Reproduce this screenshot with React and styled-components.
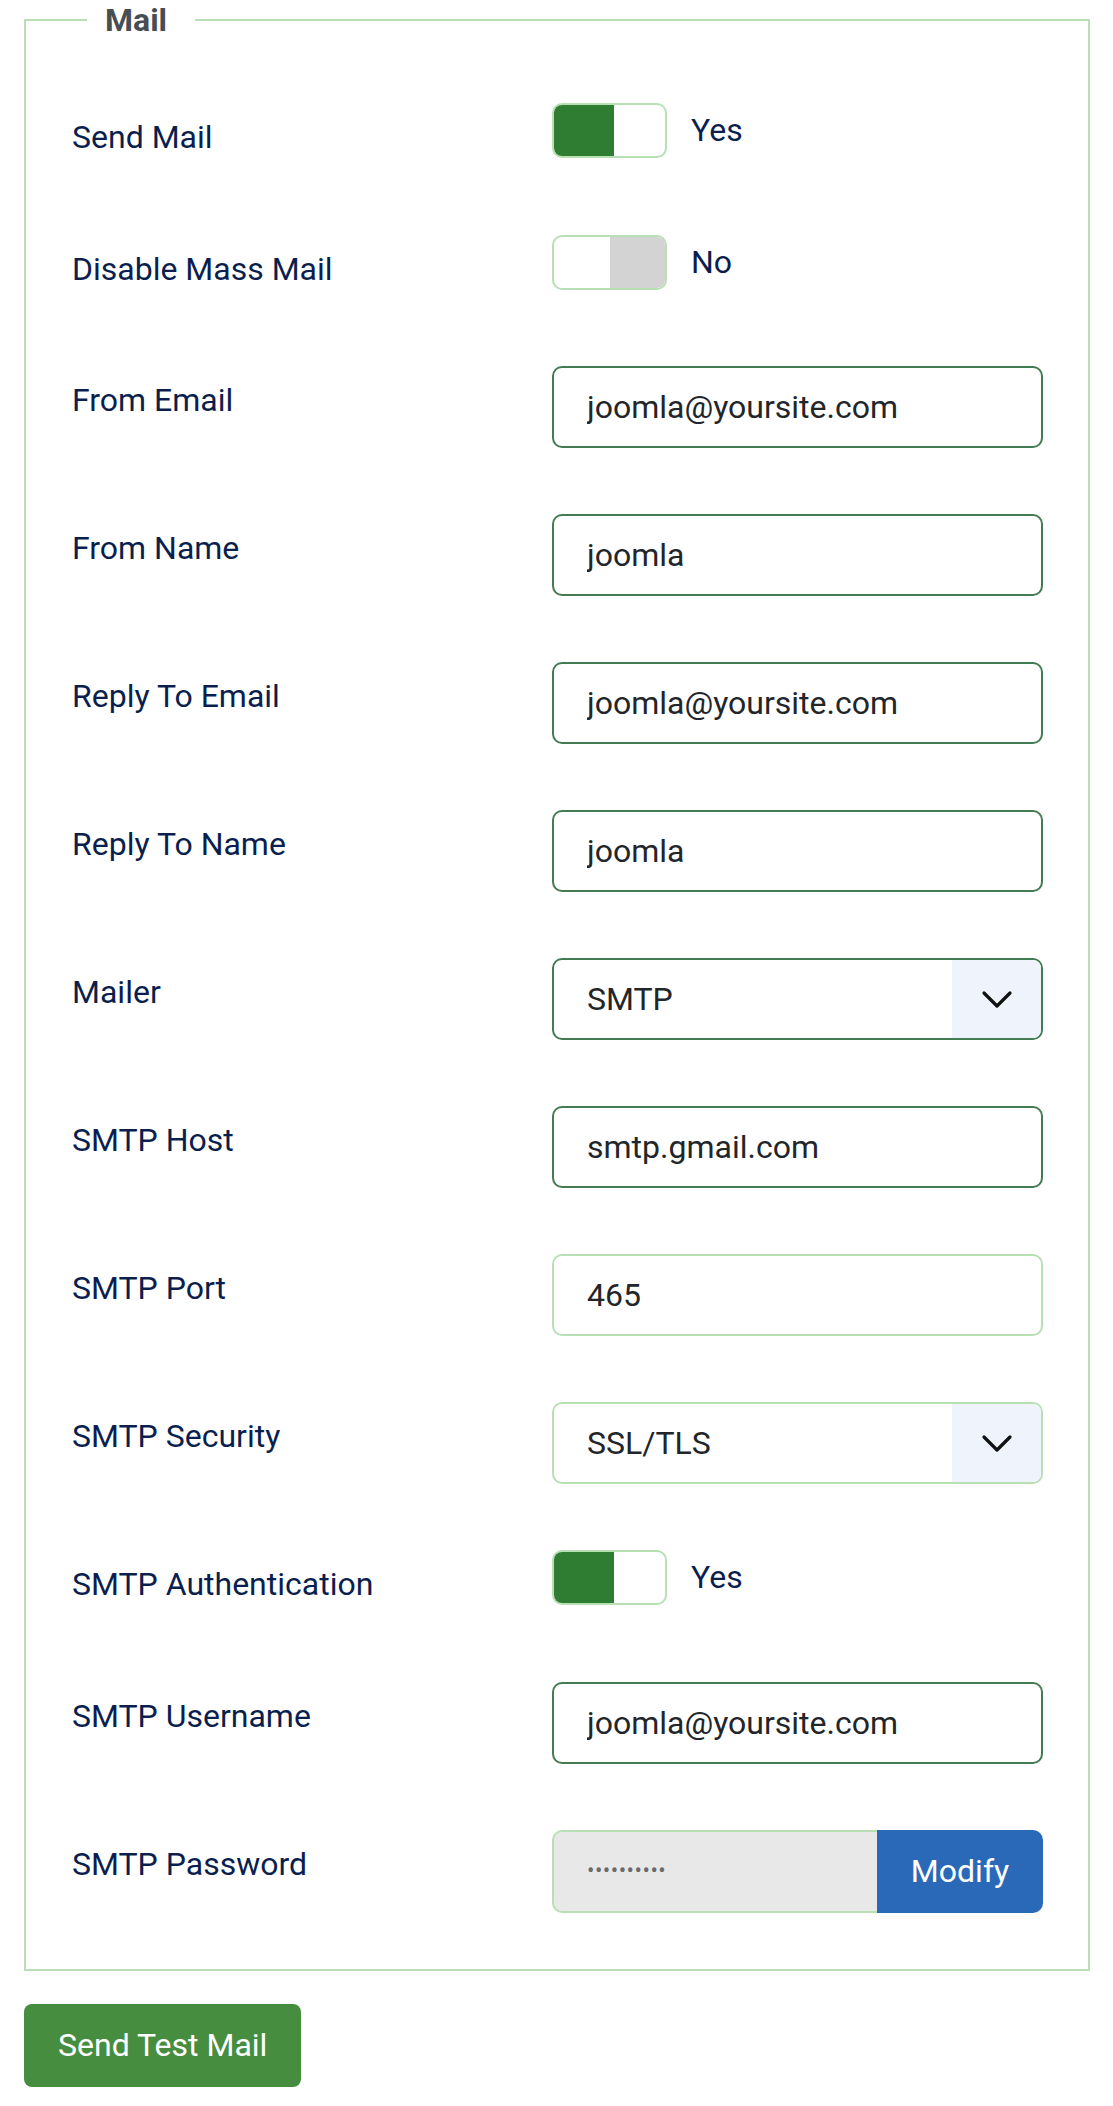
import React from 'react';
import styled, { createGlobalStyle } from 'styled-components';

const FIELDS = [
  { label: 'Send Mail', type: 'switch', on: true },
  { label: 'Disable Mass Mail', type: 'switch', on: false },
  { label: 'From Email', type: 'text', value: 'joomla@yoursite.com' },
  { label: 'From Name', type: 'text', value: 'joomla' },
  { label: 'Reply To Email', type: 'text', value: 'joomla@yoursite.com' },
  { label: 'Reply To Name', type: 'text', value: 'joomla' },
  { label: 'Mailer', type: 'select', value: 'SMTP' },
  { label: 'SMTP Host', type: 'text', value: 'smtp.gmail.com' },
  { label: 'SMTP Port', type: 'text', value: '465', light: true },
  { label: 'SMTP Security', type: 'select', value: 'SSL/TLS', light: true },
  { label: 'SMTP Authentication', type: 'switch', on: true },
  { label: 'SMTP Username', type: 'text', value: 'joomla@yoursite.com' },
  { label: 'SMTP Password', type: 'password', value: '••••••••••' },
];

export default function App() {
  const renderControl = field => {
    switch (field.type) {
      case 'switch':
        return (
          <SwitchWrap>
            <Switch $on={field.on}>
              <Knob $on={field.on} />
            </Switch>
            <SwitchText>{field.on ? 'Yes' : 'No'}</SwitchText>
          </SwitchWrap>
        );
      case 'select':
        return (
          <Select $light={field.light}>
            <SelectValue>{field.value}</SelectValue>
            <ArrowBox>
              <svg width="32" height="20" viewBox="0 0 32 20" fill="none">
                <path
                  d="M3 3 L16 16 L29 3"
                  stroke="#111"
                  strokeWidth="3.2"
                  strokeLinecap="round"
                  strokeLinejoin="round"
                />
              </svg>
            </ArrowBox>
          </Select>
        );
      case 'password':
        return (
          <InputGroup>
            <PasswordBox>{field.value}</PasswordBox>
            <ModifyButton type="button">Modify</ModifyButton>
          </InputGroup>
        );
      default:
        return <TextInput $light={field.light} value={field.value} readOnly />;
    }
  };

  return (
    <Page>
      <GlobalStyle />
      <Fieldset>
        <Legend>Mail</Legend>
        {FIELDS.map(field => (
          <ControlGroup key={field.label}>
            <Label>{field.label}</Label>
            <Controls>{renderControl(field)}</Controls>
          </ControlGroup>
        ))}
      </Fieldset>
      <TestButton type="button">Send Test Mail</TestButton>
    </Page>
  );
}

const GlobalStyle = createGlobalStyle`
  body {
    margin: 0;
    background: #fff;
    font-family: Roboto, "Liberation Sans", sans-serif;
  }
`;

const Page = styled.div`
  padding: 0 23px 0 24px;
`;

const Fieldset = styled.fieldset`
  margin: 0;
  padding: 63px 45px 56px 46px;
  border: 2px solid #b9e0b5;
  min-width: 0;
`;

const Legend = styled.legend`
  margin-left: 15px;
  padding: 0 28px 0 18px;
  color: #474d55;
  font-size: 32px;
  font-weight: 700;
  line-height: 40px;
`;

const ControlGroup = styled.div`
  display: grid;
  grid-template-columns: 480px 1fr;
  margin-bottom: 66px;

  &:last-of-type {
    margin-bottom: 0;
  }
`;

const Label = styled.label`
  padding-top: 10px;
  color: #0b1f4f;
  font-size: 32px;
  line-height: 48px;
`;

const Controls = styled.div`
  min-width: 0;
`;

const SwitchWrap = styled.div`
  display: flex;
  align-items: flex-start;
  height: 65.5px;
`;

const Switch = styled.div`
  display: flex;
  justify-content: ${({ $on }) => ($on ? 'flex-start' : 'flex-end')};
  box-sizing: border-box;
  width: 115px;
  height: 55px;
  border: 2px solid #b9e0b5;
  border-radius: 10px;
  background: #fff;
  overflow: hidden;
`;

const Knob = styled.span`
  width: ${({ $on }) => ($on ? '60px' : '55px')};
  height: 100%;
  background: ${({ $on }) => ($on ? '#2e7d32' : '#d3d3d3')};
`;

const SwitchText = styled.span`
  margin-left: 24px;
  color: #0b1f4f;
  font-size: 32px;
  line-height: 55px;
`;

const TextInput = styled.input`
  display: block;
  box-sizing: border-box;
  width: 100%;
  height: 82px;
  margin: 0;
  padding: 15px 33px;
  border: 2px solid ${({ $light }) => ($light ? '#b9e0b5' : '#437c52')};
  border-radius: 10px;
  background: #fff;
  color: #22262a;
  font-family: Roboto, "Liberation Sans", sans-serif;
  font-size: 32px;
  line-height: 48px;
  outline: none;
`;

const Select = styled.div`
  display: flex;
  box-sizing: border-box;
  height: 82px;
  border: 2px solid ${({ $light }) => ($light ? '#b9e0b5' : '#437c52')};
  border-radius: 10px;
  overflow: hidden;
  background: #fff;
`;

const SelectValue = styled.span`
  flex: 1;
  padding: 15px 33px;
  color: #22262a;
  font-size: 32px;
  line-height: 48px;
`;

const ArrowBox = styled.span`
  display: flex;
  align-items: center;
  justify-content: center;
  width: 89px;
  background: #eef3fc;

  svg {
    margin-top: 2px;
  }
`;

const InputGroup = styled.div`
  display: flex;
  height: 83px;
`;

const PasswordBox = styled.div`
  flex: 1;
  box-sizing: border-box;
  padding: 0 33px;
  border: 2px solid #b9e0b5;
  border-right: 0;
  border-radius: 10px 0 0 10px;
  background: #e8e8e8;
  color: #6b6b6b;
  font-size: 22px;
  line-height: 77px;
  letter-spacing: 0.5px;
`;

const ModifyButton = styled.button`
  width: 166px;
  border: 0;
  border-radius: 0 10px 10px 0;
  background: #2a69b8;
  color: #fff;
  font-family: Roboto, "Liberation Sans", sans-serif;
  font-size: 32px;
  line-height: 48px;
`;

const TestButton = styled.button`
  display: block;
  margin-top: 33px;
  padding: 17px 34px 18px;
  border: 0;
  border-radius: 8px;
  background: #468d3f;
  color: #fff;
  font-family: Roboto, "Liberation Sans", sans-serif;
  font-size: 32px;
  line-height: 48px;
`;
